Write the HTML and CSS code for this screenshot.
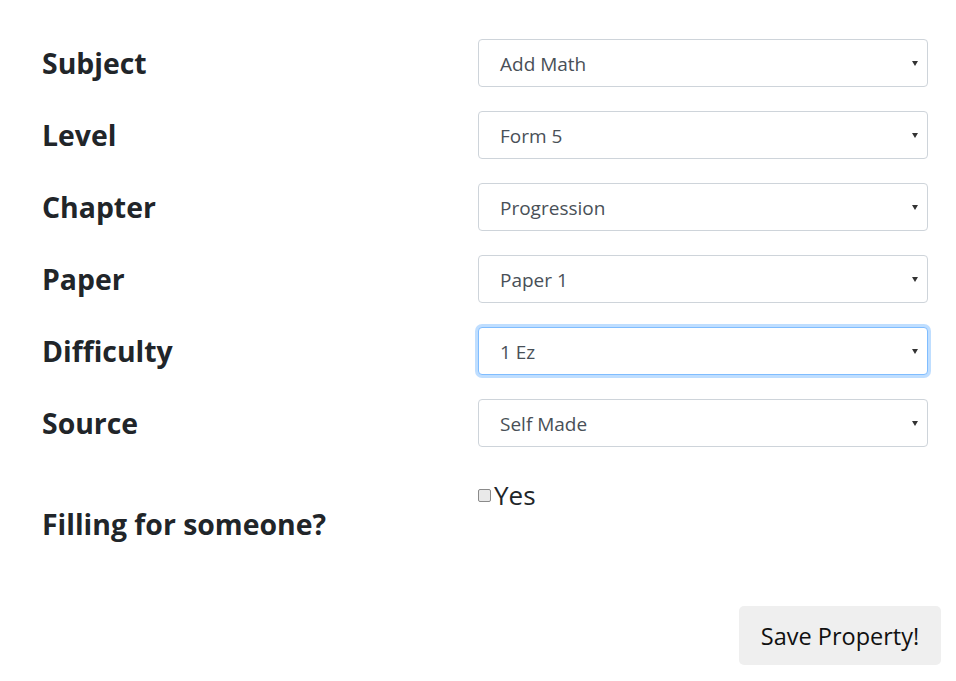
FILE: index.html
```html
<!DOCTYPE html>
<html lang="en">
<head>
<meta charset="utf-8">
<title>Property form</title>
<link rel="stylesheet" href="styles.css">
</head>
<body>
<form class="form">
  <div class="row">
    <h3 class="label">Subject</h3>
    <div class="select"><span class="value">Add Math</span><span class="arrow"></span></div>
  </div>
  <div class="row">
    <h3 class="label">Level</h3>
    <div class="select"><span class="value">Form 5</span><span class="arrow"></span></div>
  </div>
  <div class="row">
    <h3 class="label">Chapter</h3>
    <div class="select"><span class="value">Progression</span><span class="arrow"></span></div>
  </div>
  <div class="row">
    <h3 class="label">Paper</h3>
    <div class="select"><span class="value">Paper 1</span><span class="arrow"></span></div>
  </div>
  <div class="row">
    <h3 class="label">Difficulty</h3>
    <div class="select focused"><span class="value">1 Ez</span><span class="arrow"></span></div>
  </div>
  <div class="row">
    <h3 class="label">Source</h3>
    <div class="select"><span class="value">Self Made</span><span class="arrow"></span></div>
  </div>
  <div class="row row-check">
    <h3 class="label label-low">Filling for someone?</h3>
    <label class="check"><span class="box"></span><span class="yes">Yes</span></label>
  </div>
  <div class="actions">
    <button type="button" class="btn">Save Property!</button>
  </div>
</form>
</body>
</html>
```

FILE: styles.css
```css
html, body {
  margin: 0;
  padding: 0;
  background: #fff;
}
body {
  font-family: "Open Sans", "Noto Sans", sans-serif;
  color: #212529;
}
.form {
  padding: 39px 0 0 42px;
  width: 899px;
  display: flex;
  flex-direction: column;
  gap: 24px;
}
.row {
  display: grid;
  grid-template-columns: 436px 450px;
  align-items: center;
}
.label {
  margin: 0;
  font-size: 28.4px;
  font-weight: 700;
  line-height: 48px;
  color: #212529;
}
.select {
  position: relative;
  height: 48px;
  box-sizing: border-box;
  border: 1px solid #ced4da;
  border-radius: 4px;
  display: flex;
  align-items: center;
  padding: 2px 0 0 21px;
  background: #fff;
}
.select.focused {
  border-color: #80bdff;
  box-shadow: 0 0 0 3px rgba(0, 123, 255, 0.25);
}
.value {
  font-size: 19px;
  color: #495057;
}
.arrow {
  position: absolute;
  right: 9px;
  top: 21px;
  width: 0;
  height: 0;
  border-left: 3.5px solid transparent;
  border-right: 3.5px solid transparent;
  border-top: 5px solid #333;
}
.row-check {
  align-items: start;
  height: 90px;
}
.label-low {
  padding-top: 29px;
}
.check {
  display: flex;
  align-items: center;
  gap: 3px;
  height: 48px;
}
.box {
  width: 11px;
  height: 11px;
  border: 1px solid #8a8a8a;
  border-radius: 2px;
  background: #e9e9e9;
}
.yes {
  font-size: 26px;
  color: #212529;
}
.actions {
  display: flex;
  justify-content: flex-end;
  margin-top: 21px;
}
.btn {
  font-family: "Open Sans", "Noto Sans", sans-serif;
  font-size: 23.5px;
  color: #111;
  background: #efefef;
  border: none;
  border-radius: 5px;
  width: 202px;
  height: 59px;
  padding: 0;
}
```
